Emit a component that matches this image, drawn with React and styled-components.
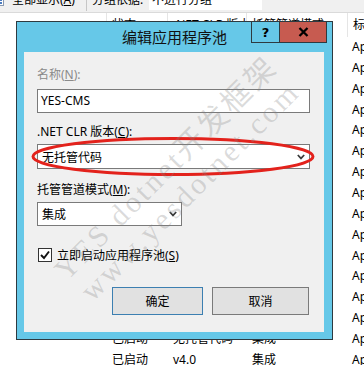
import styled, { createGlobalStyle } from "styled-components";

const GlobalStyle = createGlobalStyle`
  html, body {
    margin: 0;
    padding: 0;
  }
  body {
    width: 364px;
    height: 365px;
    overflow: hidden;
    background: #ffffff;
    font-family: "Noto Sans", "Noto Sans CJK SC", sans-serif;
    font-size: 12px;
    color: #000;
  }
`;

const Screen = styled.div`
  position: relative;
  width: 364px;
  height: 365px;
  overflow: hidden;
  background: #ffffff;
`;

const Toolbar = styled.div`
  display: flex;
  align-items: center;
  height: 24px;
  margin-top: -12px;
  background: #f0f0f0;
  border-bottom: 1px solid #dadada;
  white-space: nowrap;
`;

const ToolIcon = styled.svg`
  flex: none;
  margin-left: -8px;
`;

const ToolText = styled.span`
  margin-left: ${(p) => p.$left}px;
  line-height: 16px;
`;

const ToolSeparator = styled.div`
  width: 1px;
  height: 22px;
  margin-left: 11px;
  background: #c6c6c6;
`;

const GroupBox = styled.div`
  width: 113px;
  height: 20px;
  margin-left: 6px;
  padding-left: 3px;
  box-sizing: border-box;
  background: #ffffff;
  line-height: 20px;
`;

const Grid = styled.div`
  display: grid;
  grid-template-columns: 106px 61px 79px 101px 1fr;
  height: ${(p) => p.$h}px;
  line-height: ${(p) => p.$h}px;
  white-space: nowrap;
`;

const HeaderCell = styled.div`
  overflow: hidden;
  padding-left: 5px;
  border-left: ${(p) => (p.$first ? "none" : "1px solid #e5e5e5")};
`;

const Cell = styled.div`
  overflow: hidden;
  padding-left: ${(p) => (p.$last ? 5 : 6)}px;
`;

const Dialog = styled.div`
  position: absolute;
  left: 16px;
  top: 21px;
  width: 317px;
  height: 319px;
  box-sizing: border-box;
  border: 1px solid #2e3a40;
  background: #66c8e8;
  display: flex;
  flex-direction: column;
`;

const TitleBar = styled.div`
  flex: none;
  display: grid;
  grid-template-columns: 1fr auto;
  height: 30px;
`;

const Title = styled.div`
  grid-area: 1 / 1 / 2 / 3;
  align-self: center;
  justify-self: center;
  font-size: 15px;
  line-height: 20px;
  color: #111;
`;

const CaptionButtons = styled.div`
  grid-area: 1 / 2 / 2 / 3;
  align-self: start;
  display: flex;
  margin: -1px 5px 0 0;
`;

const CaptionButton = styled.div`
  width: ${(p) => p.$w}px;
  height: 22px;
  box-sizing: border-box;
  border: 1px solid #2e3a40;
  border-left-width: ${(p) => (p.$joined ? 0 : 1)}px;
  background: ${(p) => p.$bg};
  display: flex;
  align-items: center;
  justify-content: center;
  font-family: "DejaVu Sans", sans-serif;
  font-weight: bold;
  font-size: 13px;
  color: #000;
`;

const Client = styled.div`
  flex: 1;
  margin: 0 8px 7px 7px;
  padding: 15px 14px 0 13px;
  background: #f0f0f0;
  display: flex;
  flex-direction: column;
`;

const Label = styled.div`
  margin-top: ${(p) => p.$top || 0}px;
  height: 16px;
  line-height: 16px;
  color: ${(p) => (p.$disabled ? "#8a8a8a" : "#000")};
  white-space: nowrap;
`;

const TextBox = styled.div`
  margin-top: ${(p) => p.$top}px;
  height: 24px;
  box-sizing: border-box;
  border: 1px solid #7a7a7a;
  background: #ffffff;
  padding-left: 3px;
  line-height: 22px;
`;

const Select = styled.div`
  margin-top: ${(p) => p.$top}px;
  width: ${(p) => p.$w}px;
  height: ${(p) => p.$h}px;
  box-sizing: border-box;
  border: 1px solid #7a7a7a;
  background: #ffffff;
  padding: 0 4px 0 4px;
  display: flex;
  align-items: center;
  justify-content: space-between;
`;

const CheckRow = styled.div`
  margin-top: 21px;
  display: flex;
  align-items: center;
  gap: 5px;
  height: 16px;
  padding-left: 1px;
`;

const CheckBox = styled.div`
  width: 14px;
  height: 14px;
  box-sizing: border-box;
  border: 1px solid #333;
  background: #ffffff;
  display: flex;
  align-items: center;
  justify-content: center;
`;

const ButtonRow = styled.div`
  margin-top: 24px;
  display: flex;
  justify-content: flex-end;
  gap: 9px;
  padding-right: 1px;
`;

const Button = styled.div`
  width: ${(p) => p.$w}px;
  height: 28px;
  box-sizing: border-box;
  border: 1px solid ${(p) => (p.$primary ? "#3c7fb1" : "#7a7a7a")};
  background: #e1e1e1;
  display: flex;
  align-items: center;
  justify-content: center;
`;

const Annotation = styled.svg`
  position: absolute;
  left: 29px;
  top: 135px;
  overflow: visible;
`;

const Watermark = styled.div`
  position: absolute;
  inset: 0;
  pointer-events: none;
`;

const WatermarkLine = styled.span`
  position: absolute;
  left: ${(p) => p.$x}px;
  top: ${(p) => p.$y}px;
  transform: translate(-50%, -50%) rotate(-45deg);
  font-family: "Liberation Serif", "DejaVu Serif", "Noto Sans CJK SC", serif;
  font-size: 30px;
  letter-spacing: 3px;
  color: rgba(130, 130, 130, 0.28);
  white-space: nowrap;
`;

const Chevron = () => (
  <svg width="8" height="6" viewBox="0 0 8 6">
    <polyline points="0.8,1 4,4.4 7.2,1" fill="none" stroke="#3a3a3a" strokeWidth="1.7" />
  </svg>
);

const rows = Array.from({ length: 16 }, (_, i) => [
  "",
  "已启动",
  i === 14 || i % 3 === 1 ? "无托管代码" : "v4.0",
  "集成",
  "ApplicationPoolIdentity",
]);

export default function App() {
  return (
    <Screen>
      <GlobalStyle />
      <Toolbar>
        <ToolIcon width="12" height="12" viewBox="0 0 12 12">
          <rect x="0.5" y="0.5" width="11" height="11" fill="#fff" stroke="#8a9ab0" />
          <rect x="7" y="2" width="3" height="2" fill="#4a7bc0" />
          <rect x="7" y="5" width="3" height="2" fill="#4a7bc0" />
          <rect x="7" y="8" width="3" height="2" fill="#4a7bc0" />
        </ToolIcon>
        <ToolText $left={8}>
          全部显示(<u>A</u>)
        </ToolText>
        <ToolSeparator />
        <ToolText $left={5}>分组依据:</ToolText>
        <GroupBox>不进行分组</GroupBox>
      </Toolbar>

      <Grid $h={24}>
        <HeaderCell $first />
        <HeaderCell>状态</HeaderCell>
        <HeaderCell>.NET CLR 版本</HeaderCell>
        <HeaderCell>托管管道模式</HeaderCell>
        <HeaderCell>标识</HeaderCell>
      </Grid>
      {rows.map((r, i) => (
        <Grid key={i} $h={20.87}>
          {r.map((c, j) => (
            <Cell key={j} $last={j === 4}>
              {c}
            </Cell>
          ))}
        </Grid>
      ))}

      <Dialog>
        <TitleBar>
          <Title>编辑应用程序池</Title>
          <CaptionButtons>
            <CaptionButton $w={29} $bg="#66c8e8">?</CaptionButton>
            <CaptionButton $w={47} $bg="#c75b50" $joined>
              <svg width="11" height="10" viewBox="0 0 11 10">
                <path d="M1.5 1 L9.5 9 M9.5 1 L1.5 9" stroke="#000" strokeWidth="2.3" />
              </svg>
            </CaptionButton>
          </CaptionButtons>
        </TitleBar>
        <Client>
          <Label $disabled>
            名称(<u>N</u>):
          </Label>
          <TextBox $top={6}>YES-CMS</TextBox>
          <Label $top={11}>
            .NET CLR 版本(<u>C</u>):
          </Label>
          <Select $top={4} $w={273} $h={25}>
            <span>无托管代码</span>
            <Chevron />
          </Select>
          <Label $top={13}>
            托管管道模式(<u>M</u>):
          </Label>
          <Select $top={4} $w={145} $h={24}>
            <span>集成</span>
            <Chevron />
          </Select>
          <CheckRow>
            <CheckBox>
              <svg width="10" height="10" viewBox="0 0 10 10">
                <path d="M1 5 L4 8 L9 1.5" fill="none" stroke="#111" strokeWidth="1.9" />
              </svg>
            </CheckBox>
            <span>
              立即启动应用程序池(<u>S</u>)
            </span>
          </CheckRow>
          <ButtonRow>
            <Button $w={91} $primary>
              确定
            </Button>
            <Button $w={97}>取消</Button>
          </ButtonRow>
        </Client>
      </Dialog>

      <Annotation width="290" height="44" viewBox="0 0 290 44">
        <ellipse cx="144" cy="21.5" rx="140" ry="18" fill="none" stroke="#e3221c" strokeWidth="3" />
      </Annotation>

      <Watermark>
        <WatermarkLine $x={164} $y={166}>
          YES dotnet开发框架
        </WatermarkLine>
        <WatermarkLine $x={190} $y={191}>
          www.yesdotnet.com
        </WatermarkLine>
      </Watermark>
    </Screen>
  );
}
